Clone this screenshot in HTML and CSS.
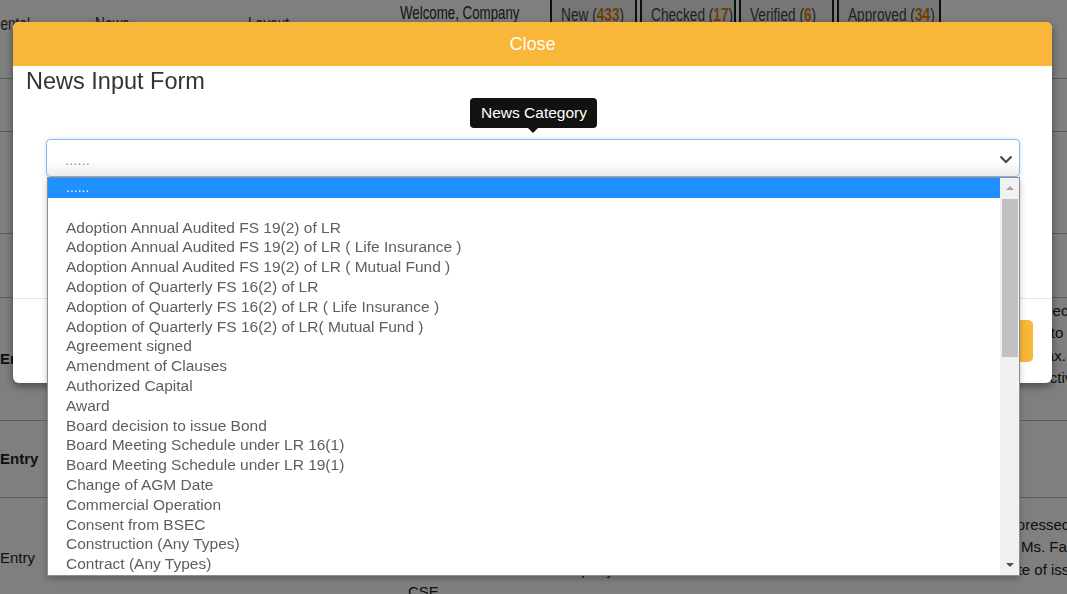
FILE: index.html
```html
<!DOCTYPE html>
<html lang="en">
<head>
<meta charset="utf-8">
<title>News Input Form</title>
<link rel="stylesheet" href="styles.css">
</head>
<body>
<div class="page">
  <header class="topbar">
    <div class="nav-item nav-clip"><span class="cond">Fundamental</span></div>
    <div class="nav-item"><span class="cond">News</span></div>
    <div class="nav-item"><span class="cond">Layout</span></div>
    <div class="welcome"><span class="cond">Welcome, Company</span></div>
    <div class="tabs">
      <span class="tab t1"><span class="cond">New (<b>433</b>)</span></span>
      <span class="tab t2"><span class="cond">Checked (<b>17</b>)</span></span>
      <span class="tab t3"><span class="cond">Verified (<b>6</b>)</span></span>
      <span class="tab t4"><span class="cond">Approved (<b>34</b>)</span></span>
    </div>
  </header>
  <table class="grid">
    <tr class="r1"><td class="c1"></td><td class="c2"></td><td class="c3"></td><td class="c4"></td></tr>
    <tr class="r2"><td class="c1"></td><td class="c2"></td><td class="c3"></td><td class="c4"></td></tr>
    <tr class="r3"><td class="c1"></td><td class="c2"></td><td class="c3"></td><td class="c4"></td></tr>
    <tr class="r4"><td class="c1 strong">Entry</td><td class="c2"></td><td class="c3"></td><td class="c4 top">under Sec-<br>agreed to<br>of the tax.<br>the effective</td></tr>
    <tr class="r5"><td class="c1 strong">Entry</td><td class="c2"></td><td class="c3"></td><td class="c4"></td></tr>
    <tr class="r6"><td class="c1">Entry</td><td class="c2"></td><td class="c3 top">The company has informed that the Board has agreed<br>to the issue of bonds subject to approval of regulators<br>and the shares of the company are listed on DSE and<br>CSE</td><td class="c4 top">expressed<br>by Ms. Farzana<br>date of issue</td></tr>
  </table>
</div>

<div class="overlay"></div>

<div class="modal">
  <div class="modal-head">Close</div>
  <div class="modal-body">
    <h4 class="modal-title">News Input Form</h4>
    <div class="field">
      <div class="tooltip">News Category</div>
      <div class="select">
        <span>......</span>
        <svg class="chev" viewBox="0 0 14 9" width="14" height="9"><path d="M1.5 1.5 L7 7 L12.5 1.5" fill="none" stroke="#444" stroke-width="2"/></svg>
      </div>
      <div class="listbox">
        <div class="options">
          <div class="opt sel">......</div>
          <div class="opt">&nbsp;</div>
          <div class="opt">Adoption Annual Audited FS 19(2) of LR</div>
          <div class="opt">Adoption Annual Audited FS 19(2) of LR ( Life Insurance )</div>
          <div class="opt">Adoption Annual Audited FS 19(2) of LR ( Mutual Fund )</div>
          <div class="opt">Adoption of Quarterly FS 16(2) of LR</div>
          <div class="opt">Adoption of Quarterly FS 16(2) of LR ( Life Insurance )</div>
          <div class="opt">Adoption of Quarterly FS 16(2) of LR( Mutual Fund )</div>
          <div class="opt">Agreement signed</div>
          <div class="opt">Amendment of Clauses</div>
          <div class="opt">Authorized Capital</div>
          <div class="opt">Award</div>
          <div class="opt">Board decision to issue Bond</div>
          <div class="opt">Board Meeting Schedule under LR 16(1)</div>
          <div class="opt">Board Meeting Schedule under LR 19(1)</div>
          <div class="opt">Change of AGM Date</div>
          <div class="opt">Commercial Operation</div>
          <div class="opt">Consent from BSEC</div>
          <div class="opt">Construction (Any Types)</div>
          <div class="opt">Contract (Any Types)</div>
        </div>
        <div class="scroll">
          <div class="sbtn"><span class="tri-up"></span></div>
          <div class="thumb"></div>
          <div class="track"></div>
          <div class="sbtn"><span class="tri-down"></span></div>
        </div>
      </div>
    </div>
  </div>
  <div class="modal-foot"><button class="btn">Submit</button></div>
</div>
</body>
</html>
```

FILE: styles.css
```css
* { box-sizing: border-box; }
html, body { margin: 0; }
body {
  width: 1067px;
  height: 594px;
  overflow: hidden;
  font-family: "Liberation Sans", Arial, sans-serif;
  background: #fff;
  color: #333;
}

/* background page */
.page { width: 1067px; }
.topbar {
  display: grid;
  grid-template-columns: 95px 153px 152px 150px auto;
  align-items: start;
  height: 78px;
  white-space: nowrap;
}
.cond { display: inline-block; transform: scaleX(0.76); transform-origin: left center; }
.nav-item { padding-top: 14px; font-size: 18px; color: #333; }
.nav-clip { display: flex; justify-content: flex-end; overflow: hidden; padding-right: 65px; }
.nav-clip .cond { transform-origin: right center; }
.welcome { padding-top: 2px; font-size: 19px; color: #2a2a2a; }
.welcome .cond { transform: scaleX(0.7); }
.tabs { display: flex; gap: 3px; }
.tab {
  border: 2px solid #1e1e1e;
  border-top: 0;
  height: 32px;
  padding: 5px 0 0 9px;
  font-size: 18px;
  background: #ececec;
  color: #444;
  overflow: hidden;
}
.t1 { width: 87px; }
.t2 { width: 96px; }
.t3 { width: 95px; }
.t4 { width: 104px; }
.tab b { color: #e07c00; }

.grid {
  border-collapse: collapse;
  table-layout: fixed;
  width: 1200px;
  font-size: 15px;
  line-height: 22.3px;
  color: #222;
  white-space: nowrap;
}
.grid td { border-top: 1px solid #b8b8b8; padding: 0; vertical-align: middle; overflow: hidden; }
.grid td.top { vertical-align: top; }
.c1 { width: 90px; }
.c2 { width: 310px; }
.c3 { width: 600px; padding-left: 8px !important; }
.c4 { width: 200px; }
.strong { font-weight: bold; }
.r1 { height: 53px; }
.r2 { height: 102px; }
.r3 { height: 64px; }
.r4 { height: 123px; }
.r4 .top { padding-top: 2px; }
.r5 { height: 77px; }
.r6 { height: 120px; }
.r6 .top { padding-top: 16px; }
.r6 .c4 { padding-left: 1px !important; }

/* overlay + modal */
.overlay { position: fixed; inset: 0; background: rgba(0, 0, 0, 0.5); }
.modal {
  position: fixed;
  left: 13px;
  top: 22px;
  width: 1039px;
  background: #fff;
  border-radius: 6px;
  box-shadow: 0 3px 9px rgba(0, 0, 0, 0.45);
}
.modal-head {
  height: 44px;
  background: #f8b739;
  border-radius: 6px 6px 0 0;
  color: #fff;
  font-size: 18px;
  display: flex;
  align-items: center;
  justify-content: center;
}
.modal-body { height: 232px; padding: 1px 13px 0; }
.modal-title { margin: 0; font-size: 23.5px; line-height: 29px; font-weight: normal; color: #333; }
.field { position: relative; margin: 43px 19px 0 20px; }

.tooltip {
  position: absolute;
  left: 424px;
  bottom: calc(100% + 11px);
  height: 30px;
  line-height: 30px;
  padding: 0 10px 0 11px;
  background: #111;
  color: #fff;
  font-size: 15.5px;
  border-radius: 4px;
  white-space: nowrap;
}
.tooltip::after {
  content: "";
  position: absolute;
  left: 50%;
  top: 100%;
  margin-left: -5px;
  border: 5px solid transparent;
  border-top-color: #111;
  border-bottom: 0;
}

.select {
  height: 38px;
  border: 1px solid #86b7e8;
  border-radius: 4px;
  box-shadow: 0 0 4px 1px rgba(70, 150, 230, 0.18);
  background: linear-gradient(#fff 55%, #eeeeee);
  display: flex;
  align-items: center;
  justify-content: space-between;
  padding: 2px 6px 0 18px;
  color: #999;
  font-size: 15px;
}
.chev { display: block; }

.listbox {
  position: absolute;
  top: 38px;
  left: 1px;
  right: 0;
  height: 399px;
  display: flex;
  background: #fff;
  border: 1px solid #8d8d8d;
  box-shadow: 0 3px 6px rgba(0, 0, 0, 0.25);
}
.options { flex: 1; overflow: hidden; }
.opt {
  height: 19.8px;
  line-height: 19.8px;
  padding-left: 18px;
  font-size: 15.5px;
  color: #5e5e5e;
  white-space: nowrap;
}
.opt.sel { background: #1e90ff; color: #e8f2ff; font-size: 14px; }

.scroll {
  width: 19px;
  background: #f1f1f1;
  display: flex;
  flex-direction: column;
}
.sbtn { height: 20px; display: flex; align-items: center; justify-content: center; flex: none; }
.thumb { height: 158px; margin: 1px 1px 0 2px; background: #c1c1c1; flex: none; }
.track { flex: 1; }
.tri-up { width: 0; height: 0; border: 4.5px solid transparent; border-top: 0; border-bottom: 4.5px solid #a3a3a3; }
.tri-down { width: 0; height: 0; border: 4.5px solid transparent; border-bottom: 0; border-top: 4.5px solid #505050; }

.modal-foot {
  height: 85px;
  border-top: 1px solid #e5e5e5;
  padding: 21px 19px 0;
  display: flex;
  justify-content: flex-end;
}
.btn {
  height: 42px;
  width: 90px;
  background: #f8b739;
  border: 0;
  border-radius: 5px;
  color: #fff;
  font-size: 16px;
  font-family: inherit;
}
```
